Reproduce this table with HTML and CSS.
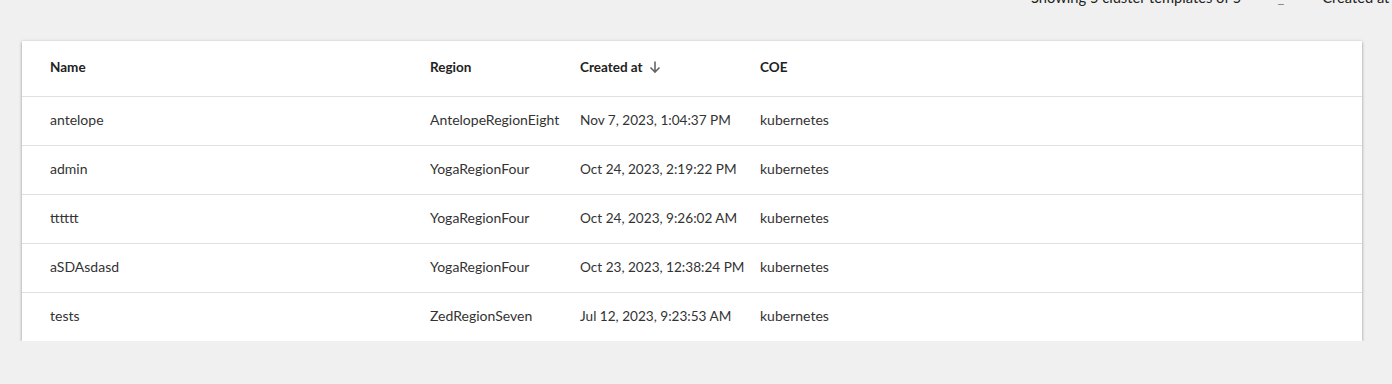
FILE: index.html
```html
<!DOCTYPE html>
<html>
<head>
<meta charset="utf-8">
<link rel="stylesheet" href="styles.css">
</head>
<body>
<div class="page">
  <div class="toolbar">
    <span class="count">Showing 5 cluster templates of 5</span>
    <span class="sep">_</span>
    <span class="sort">Created at</span>
  </div>
  <div class="card">
    <div class="row head">
      <div class="c name">Name</div>
      <div class="c region">Region</div>
      <div class="c created">Created at <svg class="arrow" width="12" height="14" viewBox="0 0 12 14"><path d="M6 1.5v10.5M1.5 7.5L6 12l4.5-4.5" fill="none" stroke="#666" stroke-width="1.6"/></svg></div>
      <div class="c coe">COE</div>
    </div>
    <div class="row">
      <div class="c name">antelope</div>
      <div class="c region">AntelopeRegionEight</div>
      <div class="c created">Nov 7, 2023, 1:04:37 PM</div>
      <div class="c coe">kubernetes</div>
    </div>
    <div class="row">
      <div class="c name">admin</div>
      <div class="c region">YogaRegionFour</div>
      <div class="c created">Oct 24, 2023, 2:19:22 PM</div>
      <div class="c coe">kubernetes</div>
    </div>
    <div class="row">
      <div class="c name">tttttt</div>
      <div class="c region">YogaRegionFour</div>
      <div class="c created">Oct 24, 2023, 9:26:02 AM</div>
      <div class="c coe">kubernetes</div>
    </div>
    <div class="row">
      <div class="c name">aSDAsdasd</div>
      <div class="c region">YogaRegionFour</div>
      <div class="c created">Oct 23, 2023, 12:38:24 PM</div>
      <div class="c coe">kubernetes</div>
    </div>
    <div class="row">
      <div class="c name">tests</div>
      <div class="c region">ZedRegionSeven</div>
      <div class="c created">Jul 12, 2023, 9:23:53 AM</div>
      <div class="c coe">kubernetes</div>
    </div>
  </div>
</div>
</body>
</html>
```
FILE: styles.css
```css
* { box-sizing: border-box; }
html, body { margin: 0; padding: 0; }
body {
  background: #f0f0f0;
  font-family: Lato, "Liberation Sans", sans-serif;
  color: #333;
  overflow: hidden;
}
.page {
  padding: 0 30px 0 22px;
}
.toolbar {
  display: flex;
  align-items: baseline;
  height: 20px;
  margin-top: -13px;
  padding-left: 1009px;
  font-size: 14.7px;
  line-height: 20px;
  color: #222;
  white-space: nowrap;
}
.toolbar .count { margin-right: 36px; }
.toolbar .sep { color: #888; margin-right: 38px; }
.card {
  margin-top: 34px;
  background: #fff;
  box-shadow: 0 1px 3px rgba(0,0,0,0.4);
}
.row {
  display: flex;
  align-items: center;
  height: 49px;
  padding-left: 28px;
  padding-bottom: 3px;
  border-top: 1px solid #e0e0e0;
  font-size: 14px;
  color: #333;
}
.row.head {
  height: 55px;
  border-top: none;
  font-weight: bold;
  font-size: 13.5px;
  color: #222;
}
.c.name { width: 380px; }
.c.region { width: 150px; }
.c.created { width: 180px; display: flex; align-items: center; font-size: 13.6px; }
.head .c.created { font-size: 13.5px; }
.arrow { margin-left: 6px; }
```
